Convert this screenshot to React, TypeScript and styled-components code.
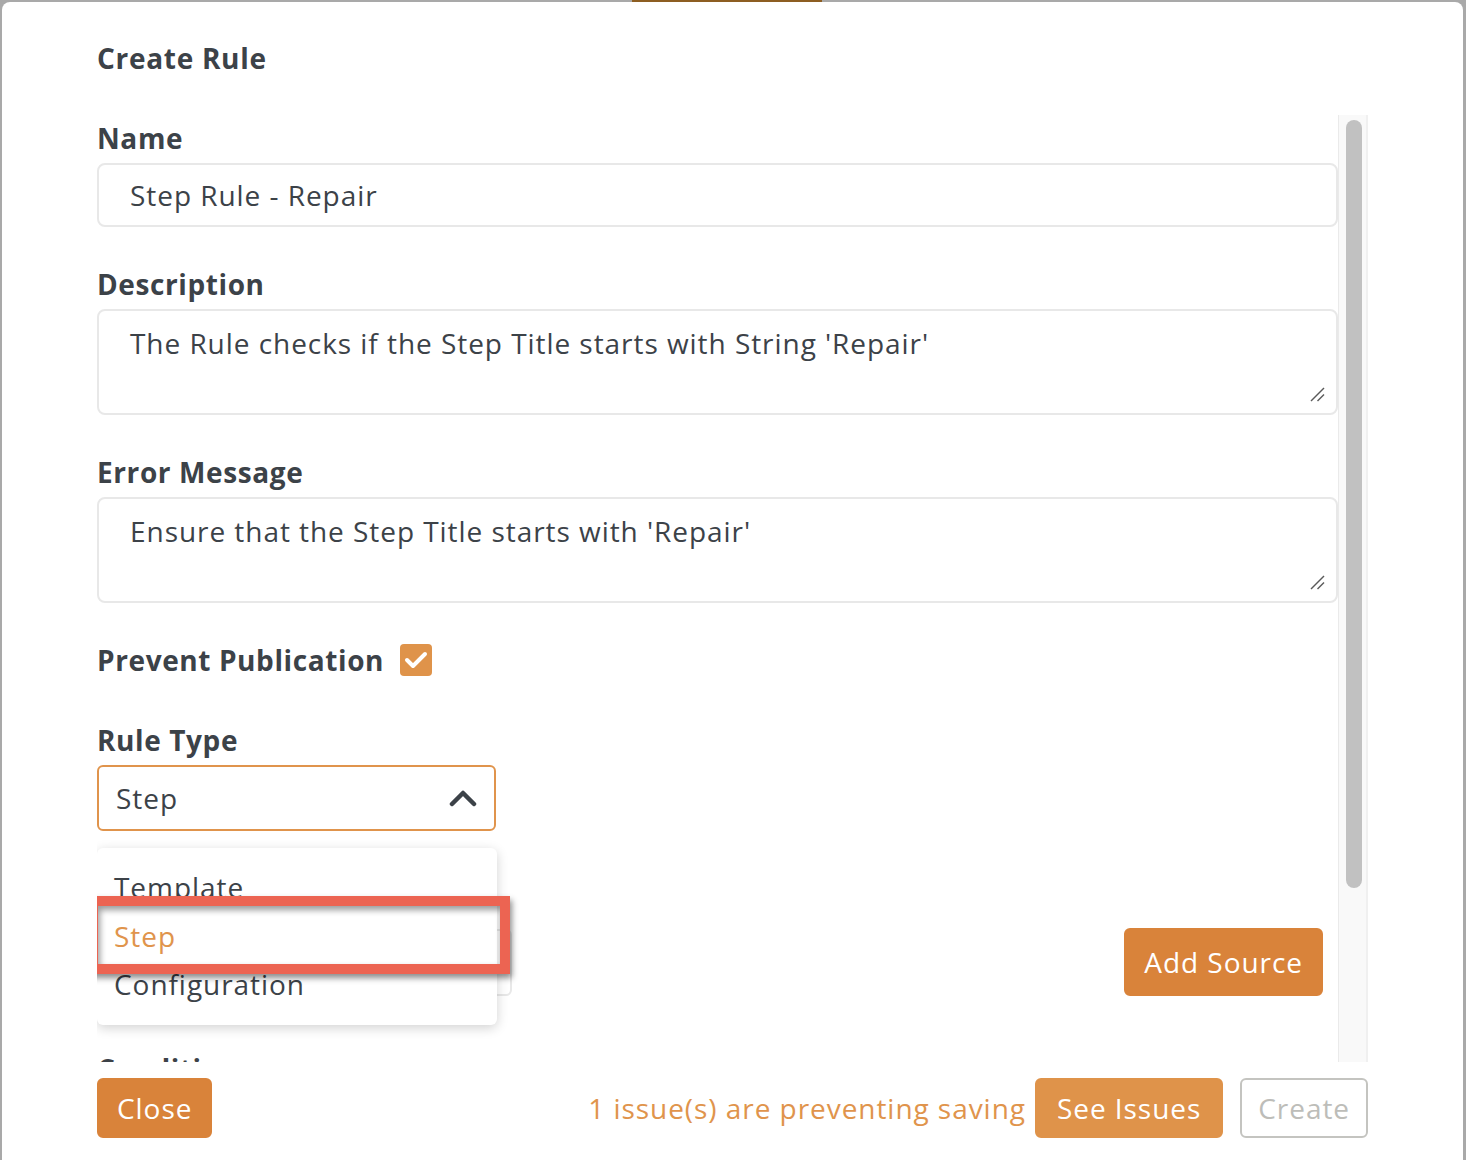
import styled, { createGlobalStyle } from 'styled-components'

const GlobalStyle = createGlobalStyle`
    html, body {
        margin: 0;
        padding: 0;
        background: #a9a9a9;
    }
    body {
        font-family: "Open Sans", "Liberation Sans", sans-serif;
        color: #3c4248;
        letter-spacing: 0.95px;
    }
    input, textarea, button {
        letter-spacing: 0.95px;
    }
    * {
        box-sizing: border-box;
    }
`

const orange = '#d9833a'
const orangeLight = '#df934a'
const text = '#3c4248'

const TopStrip = styled.div`
    height: 2px;
    display: flex;
    padding-left: 632px;
    .tab-mark {
        width: 190px;
        background: #8d5e22;
    }
`

const Modal = styled.div`
    margin: 0 3px 0 2px;
    height: 1158px;
    background: #fff;
    border-radius: 8px 8px 0 0;
    display: flex;
    flex-direction: column;
    padding: 0 95px;
    overflow: hidden;
`

const Header = styled.div`
    padding: 39px 0 40px;
`

const Title = styled.h2`
    margin: 0;
    font-size: 28px;
    line-height: 34px;
    font-weight: 700;
    letter-spacing: 0.7px;
    color: ${text};
`

const BodyFrame = styled.div`
    flex: 1;
    min-height: 0;
    display: flex;
`

const Body = styled.div`
    flex: 1;
    min-width: 0;
    overflow: hidden;
    padding-top: 6px;
`

const ScrollTrack = styled.div`
    width: 30px;
    background: #f9f9f9;
    border-left: 1px solid #eaeaea;
    border-right: 2px solid #f0f0f0;
    padding: 5px 4px 0 7px;
    .thumb {
        height: 768px;
        background: #c1c1c1;
        border-radius: 8px;
    }
`

const Field = styled.div<{ $space?: number }>`
    display: flex;
    flex-direction: column;
    gap: 8px;
    margin-bottom: ${({ $space }) => $space ?? 40}px;
`

const Label = styled.label`
    font-size: 28px;
    line-height: 34px;
    font-weight: 700;
    letter-spacing: 0.6px;
    color: ${text};
`

const TextInput = styled.input`
    width: 100%;
    height: 64px;
    border: 2px solid #e8e8e8;
    border-radius: 8px;
    padding: 0 31px;
    font-family: inherit;
    font-size: 28px;
    color: ${text};
    outline: none;
`

const AreaWrap = styled.div`
    position: relative;
    svg {
        position: absolute;
        right: 12px;
        bottom: 12px;
        pointer-events: none;
    }
`

const TextArea = styled.textarea`
    width: 100%;
    height: 106px;
    border: 2px solid #e8e8e8;
    border-radius: 8px;
    padding: 16px 31px;
    font-family: inherit;
    font-size: 28px;
    line-height: 32px;
    color: ${text};
    resize: none;
    outline: none;
    display: block;
`

const CheckRow = styled.div`
    display: flex;
    align-items: center;
    gap: 16px;
    height: 34px;
    margin-bottom: 46px;
`

const Checkbox = styled.span`
    width: 32px;
    height: 32px;
    border-radius: 4px;
    background: ${orangeLight};
    display: flex;
    align-items: center;
    justify-content: center;
`

const SelectWrap = styled.div`
    position: relative;
    width: 399px;
`

const SelectBox = styled.div<{ $open?: boolean }>`
    height: 66px;
    border: 2px solid ${({ $open }) => ($open ? '#e0944c' : '#e8e8e8')};
    border-radius: 6px;
    padding: 0 17px 0 17px;
    display: flex;
    align-items: center;
    justify-content: space-between;
    font-size: 28px;
    color: ${text};
`

const Menu = styled.ul`
    position: absolute;
    top: 83px;
    left: 0;
    width: 400px;
    margin: 0;
    padding: 15px 0 16px;
    list-style: none;
    background: #fff;
    border-radius: 6px;
    box-shadow: 0 3px 12px rgba(0, 0, 0, 0.18);
    z-index: 5;
`

const MenuItem = styled.li<{ $active?: boolean }>`
    height: 48.5px;
    line-height: 48px;
    padding: 0 17px;
    font-size: 28px;
    color: ${({ $active }) => ($active ? '#e0944c' : text)};
`

const Highlight = styled.div`
    position: absolute;
    left: -9px;
    top: 131px;
    width: 422px;
    height: 78px;
    border: 10px solid #ec6452;
    box-shadow: 2px 4px 6px rgba(0, 0, 0, 0.45), inset 2px 4px 6px rgba(0, 0, 0, 0.4);
    z-index: 6;
    pointer-events: none;
`

const SourceRow = styled.div`
    display: flex;
    align-items: center;
    justify-content: space-between;
    padding-right: 15px;
    margin-top: 15px;
`

const SourceSelect = styled.div`
    width: 415px;
    height: 67px;
    border: 2px solid #e8e8e8;
    border-radius: 6px;
`

const Button = styled.button<{ $tone?: 'solid' | 'light' | 'outline'; $tall?: boolean; $pad?: number }>`
    height: ${({ $tall }) => ($tall ? 68 : 60)}px;
    padding: 0 ${({ $pad }) => $pad ?? 18}px;
    border-radius: 6px;
    font-family: inherit;
    font-size: 28px;
    cursor: pointer;
    background: ${({ $tone }) =>
        $tone === 'light' ? orangeLight : $tone === 'outline' ? '#fff' : orange};
    color: ${({ $tone }) => ($tone === 'outline' ? '#bdbdb9' : '#fff')};
    border: 2px solid ${({ $tone }) =>
        $tone === 'light' ? orangeLight : $tone === 'outline' ? '#c4c4c0' : orange};
`

const ConditionRow = styled.div`
    display: flex;
    gap: 16px;
    .box {
        flex: 1;
        height: 66px;
        border: 2px solid #e8e8e8;
        border-radius: 6px;
    }
`

const Footer = styled.div`
    display: flex;
    align-items: center;
    padding: 16px 0 22px;
    .issues {
        margin-left: auto;
        margin-right: 9px;
        font-size: 28px;
        color: #e0944c;
    }
    .create {
        margin-left: 17px;
    }
`

const ChevronUp = () => (
    <svg width="28" height="18" viewBox="0 0 28 18">
        <polyline
            points="3,15 14,4 25,15"
            fill="none"
            stroke={text}
            strokeWidth="4.5"
            strokeLinecap="round"
            strokeLinejoin="round"
        />
    </svg>
)

const Check = () => (
    <svg width="24" height="20" viewBox="0 0 24 20">
        <polyline
            points="3,10 9,16 21,4"
            fill="none"
            stroke="#fff"
            strokeWidth="4"
            strokeLinecap="round"
            strokeLinejoin="round"
        />
    </svg>
)

const Grip = () => (
    <svg width="16" height="16" viewBox="0 0 16 16">
        <line x1="1" y1="14" x2="14" y2="1" stroke="#5a5a5a" strokeWidth="1.5" />
        <line x1="7.5" y1="14" x2="14" y2="7.5" stroke="#5a5a5a" strokeWidth="1.5" />
    </svg>
)

const Area = ({ value }: { value: string }) => (
    <AreaWrap>
        <TextArea defaultValue={value} />
        <Grip />
    </AreaWrap>
)

export default function App() {
    return (
        <>
            <GlobalStyle />
            <TopStrip>
                <div className="tab-mark" />
            </TopStrip>
            <Modal>
                <Header>
                    <Title>Create Rule</Title>
                </Header>
                <BodyFrame>
                    <Body>
                        <Field>
                            <Label>Name</Label>
                            <TextInput defaultValue="Step Rule - Repair" />
                        </Field>
                        <Field>
                            <Label>Description</Label>
                            <Area value="The Rule checks if the Step Title starts with String 'Repair'" />
                        </Field>
                        <Field>
                            <Label>Error Message</Label>
                            <Area value="Ensure that the Step Title starts with 'Repair'" />
                        </Field>
                        <CheckRow>
                            <Label>Prevent Publication</Label>
                            <Checkbox>
                                <Check />
                            </Checkbox>
                        </CheckRow>
                        <Field>
                            <Label>Rule Type</Label>
                            <SelectWrap>
                                <SelectBox $open>
                                    <span>Step</span>
                                    <ChevronUp />
                                </SelectBox>
                                <Menu>
                                    <MenuItem>Template</MenuItem>
                                    <MenuItem $active>Step</MenuItem>
                                    <MenuItem>Configuration</MenuItem>
                                </Menu>
                                <Highlight />
                            </SelectWrap>
                        </Field>
                        <Field $space={56}>
                            <Label>Sources</Label>
                            <SourceRow>
                                <SourceSelect />
                                <Button $tall>Add Source</Button>
                            </SourceRow>
                        </Field>
                        <Field $space={0}>
                            <Label>Conditions</Label>
                            <ConditionRow>
                                <div className="box" />
                                <div className="box" />
                                <div className="box" />
                            </ConditionRow>
                        </Field>
                    </Body>
                    <ScrollTrack>
                        <div className="thumb" />
                    </ScrollTrack>
                </BodyFrame>
                <Footer>
                    <Button>Close</Button>
                    <span className="issues">1 issue(s) are preventing saving</span>
                    <Button $tone="light" $pad={20}>
                        See Issues
                    </Button>
                    <Button $tone="outline" $pad={16} className="create">
                        Create
                    </Button>
                </Footer>
            </Modal>
        </>
    )
}
